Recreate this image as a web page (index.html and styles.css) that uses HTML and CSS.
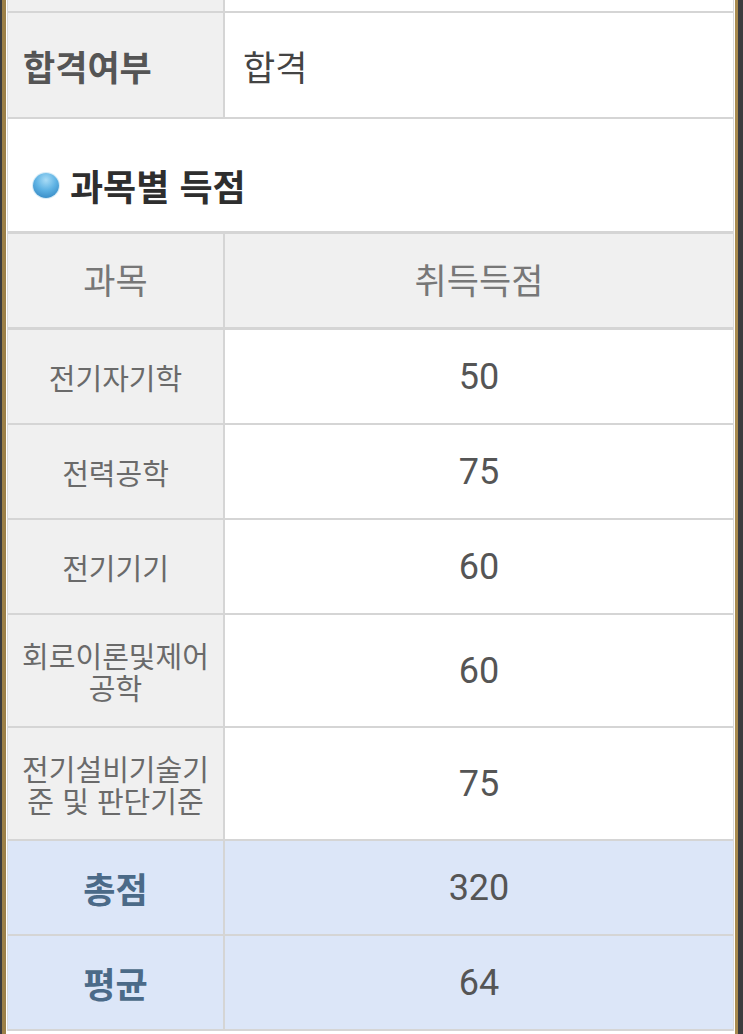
FILE: index.html
```html
<!DOCTYPE html>
<html lang="ko">
<head>
<meta charset="utf-8">
<link rel="stylesheet" href="styles.css">
</head>
<body>
<div class="frame">
  <div class="sheet">
    <div class="row row-cut">
      <div class="th"></div>
      <div class="td"></div>
    </div>
    <div class="row row-pass">
      <div class="th th-label">합격여부</div>
      <div class="td td-value">합격</div>
    </div>
    <div class="section-title">
      <span class="bullet"></span>
      <span class="title-text">과목별 득점</span>
    </div>
    <div class="row row-head">
      <div class="th head-cell">과목</div>
      <div class="td head-cell head-right">취득득점</div>
    </div>
    <div class="row row-data">
      <div class="th subject">전기자기학</div>
      <div class="td score">50</div>
    </div>
    <div class="row row-data">
      <div class="th subject">전력공학</div>
      <div class="td score">75</div>
    </div>
    <div class="row row-data">
      <div class="th subject">전기기기</div>
      <div class="td score">60</div>
    </div>
    <div class="row row-data row-tall">
      <div class="th subject">회로이론및제어<br>공학</div>
      <div class="td score">60</div>
    </div>
    <div class="row row-data row-tall">
      <div class="th subject">전기설비기술기<br>준 및 판단기준</div>
      <div class="td score">75</div>
    </div>
    <div class="row row-data row-sum">
      <div class="th sum-label">총점</div>
      <div class="td score">320</div>
    </div>
    <div class="row row-data row-sum">
      <div class="th sum-label">평균</div>
      <div class="td score">64</div>
    </div>
  </div>
</div>
</body>
</html>
```

FILE: styles.css
```css
html, body {
  margin: 0;
  padding: 0;
}

body {
  background: #3c3c3e;
  font-family: "Noto Sans CJK KR", "Noto Sans", sans-serif;
  height: 1034px;
  overflow: hidden;
}

.frame {
  margin-left: 2px;
  width: 729px;
  height: 1034px;
  border-left: 4px solid #9c8048;
  border-right: 3px solid #a88a4e;
  background: #ffffff;
}

.sheet {
  margin: 0 1px;
  border-left: 1px solid #d9d9d9;
  border-right: 1px solid #d9d9d9;
  background: #fff;
}

.row {
  display: grid;
  grid-template-columns: 217px 1fr;
  border-bottom: 2px solid #d5d5d5;
}

.th {
  background: #f0f0f0;
  border-right: 2px solid #d5d5d5;
  display: flex;
  align-items: center;
  justify-content: center;
  text-align: center;
}

.td {
  background: #ffffff;
  display: flex;
  align-items: center;
  justify-content: center;
}

.row-cut {
  height: 11px;
}

.row-pass {
  height: 104px;
}

.th-label {
  justify-content: flex-start;
  padding-left: 15px;
  font-size: 35px;
  font-weight: 700;
  color: #555555;
}

.td-value {
  justify-content: flex-start;
  padding-left: 18px;
  font-size: 35px;
  color: #444444;
}

.section-title {
  height: 112px;
  display: flex;
  align-items: center;
  padding-left: 25px;
  padding-top: 20px;
  box-sizing: border-box;
  background: #ffffff;
}

.bullet {
  width: 26px;
  height: 25px;
  border-radius: 50%;
  background: radial-gradient(circle at 50% 28%, #a9dcf6 0%, #5fb3e4 45%, #2a7dbb 100%);
  box-shadow: 0 0 0 1px #d7ecf7;
  margin-right: 11px;
}

.title-text {
  font-size: 36px;
  font-weight: 700;
  color: #2e2e2e;
}

.row-head {
  border-top: 3px solid #d5d5d5;
  border-bottom: 3px solid #d5d5d5;
  height: 93px;
}

.head-cell {
  font-size: 35px;
  color: #777777;
  padding-bottom: 4px;
}

.head-right {
  background: #f0f0f0;
}

.row-data {
  height: 93px;
}

.row-tall {
  height: 111px;
}

.subject {
  font-size: 29px;
  line-height: 32px;
  color: #6a6a6a;
}

.score {
  font-family: Roboto, "Noto Sans", sans-serif;
  font-size: 36px;
  color: #555555;
}

.row-sum .th,
.row-sum .td {
  background: #dce6f8;
}

.sum-label {
  font-size: 35px;
  font-weight: 700;
  color: #4b6a88;
}
```
